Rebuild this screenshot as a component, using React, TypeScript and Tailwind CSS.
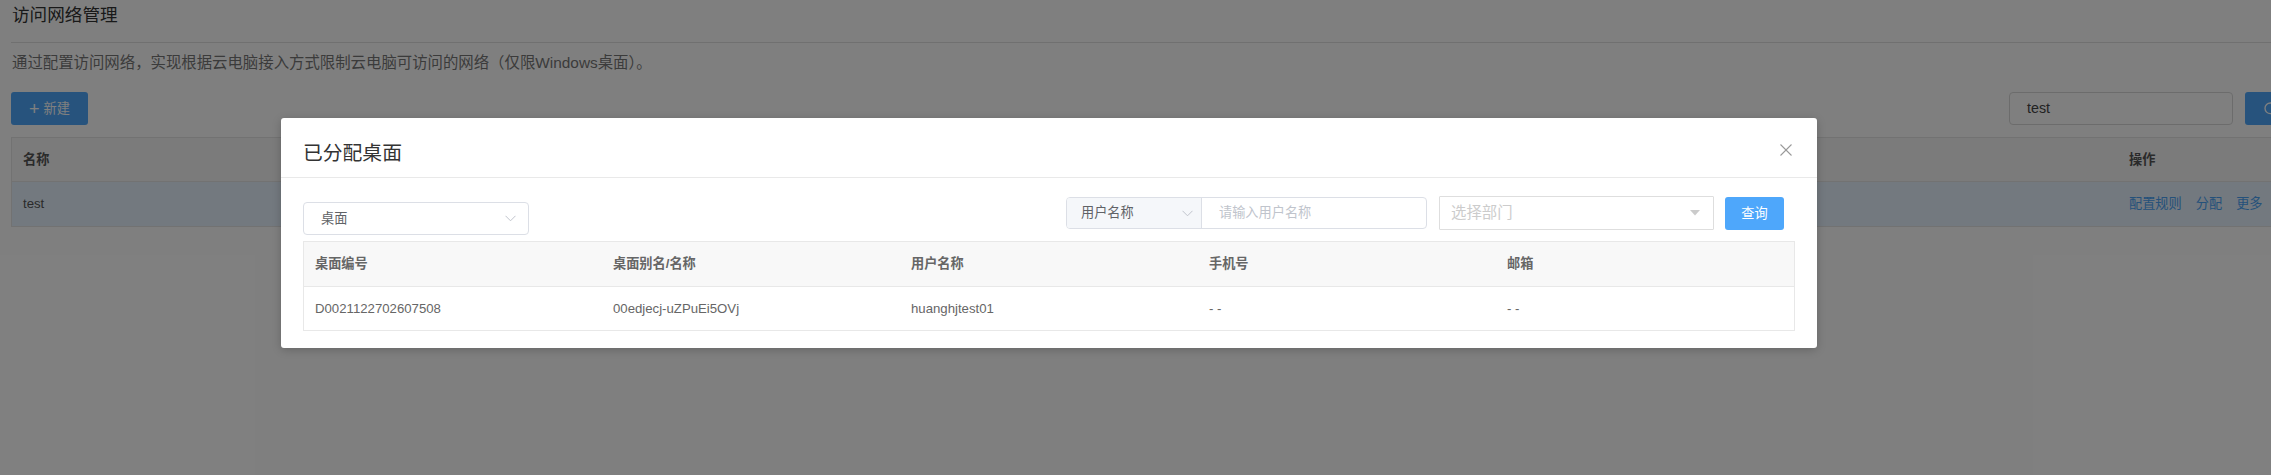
import { Search } from 'lucide-react'

const font = { fontFamily: '"Liberation Sans", "Noto Sans CJK SC", sans-serif' }

const Chevron = () => (
  <svg width="11" height="7" viewBox="0 0 11 7" fill="none">
    <polyline points="0.5,0.8 5.5,5.8 10.5,0.8" stroke="#c0c4cc" strokeWidth="1" />
  </svg>
)

const columns = ['桌面编号', '桌面别名/名称', '用户名称', '手机号', '邮箱']
const rows = [['D0021122702607508', '00edjecj-uZPuEi5OVj', 'huanghjtest01', '- -', '- -']]

const AssignedDesktopModal = () => (
  <div className="absolute left-[281px] top-[118px] w-[1536px] bg-white rounded-[3px] shadow-[0_2px_10px_rgba(0,0,0,0.2)]">
    {/* header */}
    <div className="relative h-[60px] border-b border-[#e9e9e9] px-[22px] pt-[20px]">
      <h3 className="text-[19.8px] leading-[30px] text-[#333] font-normal">已分配桌面</h3>
      <button className="absolute right-[25px] top-[26px] w-[12px] h-[12px]">
        <svg width="12" height="12" viewBox="0 0 12 12">
          <line x1="0.5" y1="0.5" x2="11.5" y2="11.5" stroke="#9a9a9a" strokeWidth="1.1" />
          <line x1="11.5" y1="0.5" x2="0.5" y2="11.5" stroke="#9a9a9a" strokeWidth="1.1" />
        </svg>
      </button>
    </div>

    {/* body */}
    <div className="px-[22px] pt-[18px] pb-[17px]">
      <div className="flex justify-between">
        <div className="mt-[6px] w-[226px] h-[33px] border border-[#dcdfe6] rounded-[4px] flex items-center justify-between pl-[17px] pr-[12px]">
          <span className="text-[13.2px] text-[#606266]">桌面</span>
          <Chevron />
        </div>

        <div className="flex items-start mr-[11px]">
          <div className="mt-px flex h-[32px] w-[361px] border border-[#dcdfe6] rounded-[4px] overflow-hidden">
            <div className="w-[135px] bg-[#f5f7fa] border-r border-[#dcdfe6] flex items-center justify-between pl-[14px] pr-[8px]">
              <span className="text-[13.2px] text-[#606266]">用户名称</span>
              <Chevron />
            </div>
            <div className="flex-1 flex items-center pl-[17px]">
              <span className="text-[13.2px] text-[#c0c4cc]">请输入用户名称</span>
            </div>
          </div>
          <div className="ml-[12px] w-[275px] h-[34px] border border-[#dedede] rounded-[1px] flex items-center justify-between pl-[11px] pr-[13px]">
            <span className="text-[15.4px] text-[#cccccc]">选择部门</span>
            <svg width="10" height="6" viewBox="0 0 10 6">
              <polygon points="0,0 10,0 5,5.5" fill="#cbcbcb" />
            </svg>
          </div>
          <button className="ml-[11px] mt-px w-[59px] h-[33px] rounded-[3px] bg-[#4ea7fb] text-white text-[13.2px]">
            查询
          </button>
        </div>
      </div>

      <div className="mt-[6px] border border-[#e8e8e8]">
        <div className="grid grid-cols-5 h-[45px] bg-[#f8f8f8] border-b border-[#e8e8e8] items-center">
          {columns.map((c) => (
            <div key={c} className="px-[11px] text-[13.2px] font-bold text-[#666]">
              {c}
            </div>
          ))}
        </div>
        {rows.map((r) => (
          <div key={r[0]} className="grid grid-cols-5 h-[43px] items-center">
            {r.map((cell, i) => (
              <div key={i} className="px-[11px] text-[13.2px] text-[#666]">
                {cell}
              </div>
            ))}
          </div>
        ))}
      </div>
    </div>
  </div>
)

export default function App() {
  return (
    <div className="relative w-full h-[475px] overflow-hidden bg-white" style={font}>
      <div className="w-[2330px] px-[11px]">
        <div className="h-[43px] border-b border-[#e0e0e0] pt-[2px]">
          <h2 className="text-[17.6px] leading-[26px] text-[#333] pl-px">访问网络管理</h2>
        </div>

        <p className="mt-[8px] text-[15.4px] leading-[24px] text-[#777] pl-px">
          通过配置访问网络，实现根据云电脑接入方式限制云电脑可访问的网络（仅限Windows桌面）。
        </p>

        <div className="mt-[17px] flex justify-between items-center">
          <button className="w-[77px] h-[33px] rounded-[3px] bg-[#4ea7fb] text-white text-[13.2px] flex items-center justify-center gap-[4px]">
            <span className="text-[18px] leading-none font-light">+</span>
            <span>新建</span>
          </button>
          <div className="flex items-center">
            <div className="w-[224px] h-[33px] border border-[#d9d9d9] rounded-[4px] flex items-center pl-[17px] text-[14.3px] text-[#444]">
              test
            </div>
            <button className="ml-[12px] w-[74px] h-[33px] rounded-[3px] bg-[#4ea7fb] flex items-center justify-start pl-[18px]">
              <Search size={16} color="white" strokeWidth={2} />
            </button>
          </div>
        </div>

        <div className="mt-[12px] border border-[#e5e5e5]">
          <div className="grid grid-cols-[1fr_200px] h-[44px] bg-[#f6f6f6] border-b border-[#e5e5e5] items-center">
            <div className="px-[11px] text-[13.2px] font-bold text-[#555]">名称</div>
            <div className="px-[11px] text-[13.2px] font-bold text-[#555]">操作</div>
          </div>
          <div className="grid grid-cols-[1fr_200px] h-[44px] bg-[#e6f3ff] items-center">
            <div className="px-[11px] text-[13.2px] text-[#555]">test</div>
            <div className="px-[11px] text-[13.2px] text-[#4aa2f5] flex gap-[14px]">
              <span>配置规则</span>
              <span>分配</span>
              <span>更多</span>
            </div>
          </div>
        </div>
      </div>

      <div className="absolute inset-0 bg-black/50" />
      <AssignedDesktopModal />
    </div>
  )
}
